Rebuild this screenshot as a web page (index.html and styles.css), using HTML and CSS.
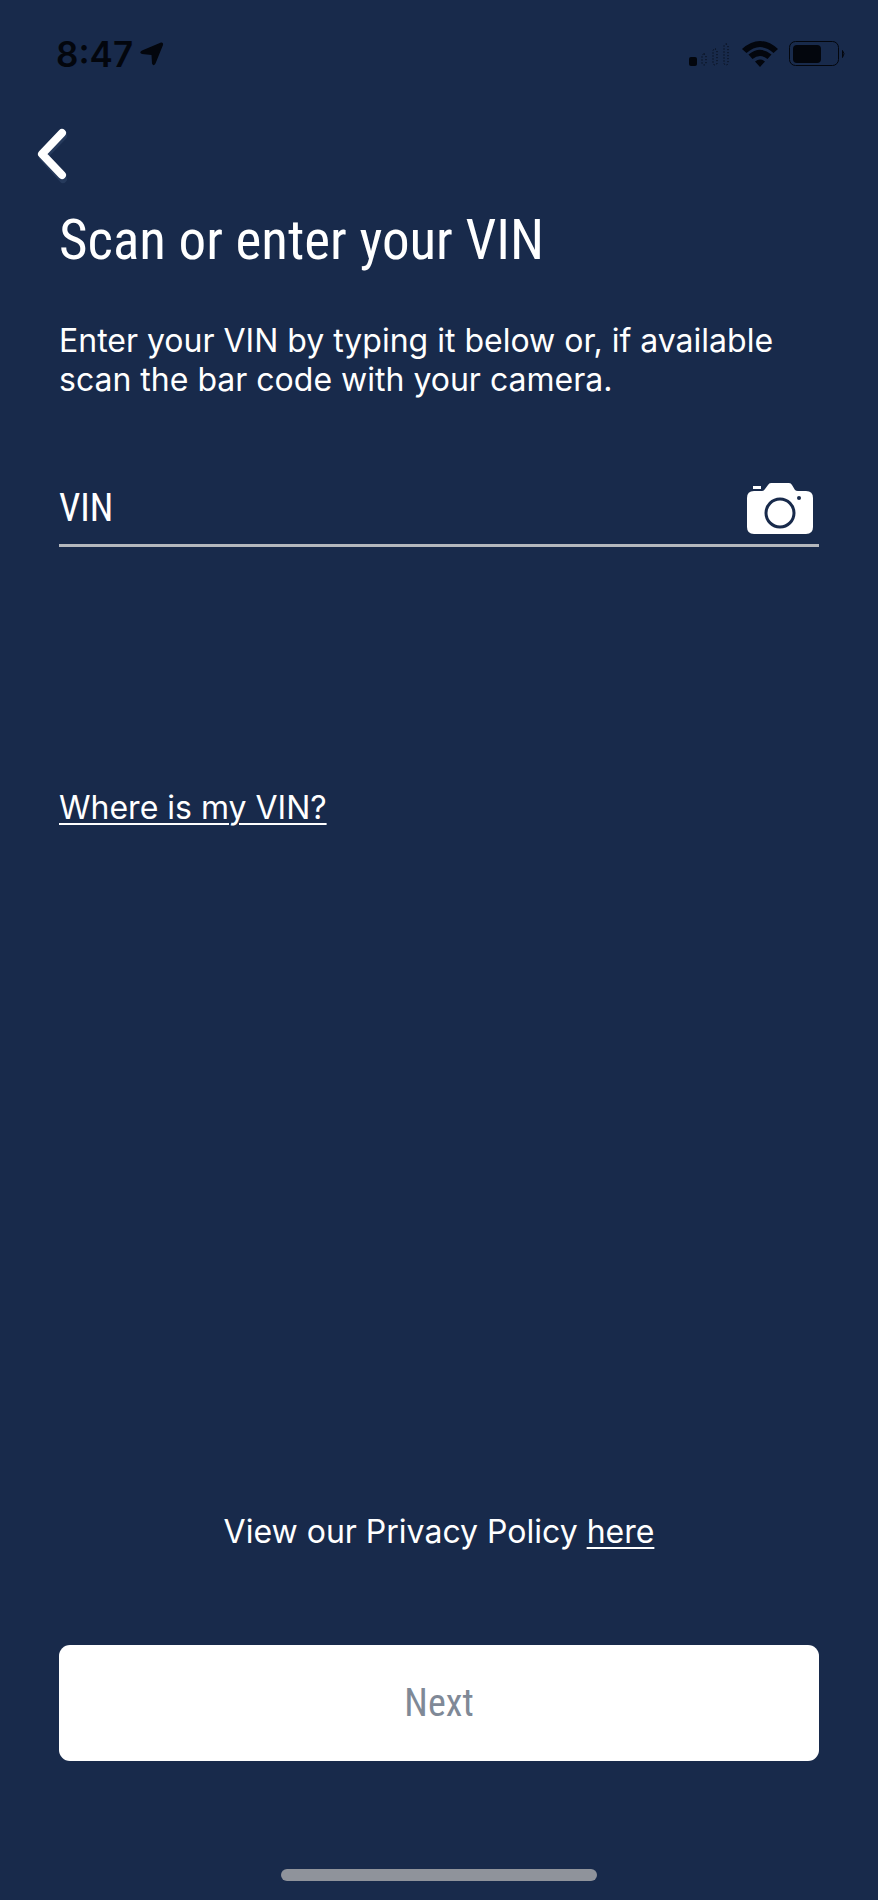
FILE: index.html
```html
<!DOCTYPE html>
<html lang="en">
<head>
<meta charset="utf-8">
<meta name="viewport" content="width=device-width, initial-scale=1">
<title>Scan or enter your VIN</title>
<link rel="stylesheet" href="styles.css">
</head>
<body>
<div class="screen">
  <header class="status">
    <div class="status-left">
      <span class="time">8:47</span>
      <svg class="location" width="24" height="24" viewBox="0 0 24 24" aria-hidden="true"><path d="M21 .5Q23.500 0 23 3L15.500 21.500Q13.500 25 12 21.500L11.500 13 2 12Q-1.500 10.500 2 8.500Z"/></svg>
    </div>
    <div class="status-right">
      <svg width="42" height="26" viewBox="0 0 42 26" aria-hidden="true">
        <rect x="0" y="16" width="8" height="9" rx="2"/>
        <g class="faint-bars">
          <rect x="13" y="13" width="4" height="11" rx="2"/>
          <rect x="24" y="8" width="4" height="16" rx="2"/>
          <rect x="35" y="3" width="4" height="21" rx="2"/>
        </g>
      </svg>
      <svg width="36" height="26" viewBox="0 0 36 26" aria-hidden="true"><path d="M0 8Q18-8 36 8L31.500 12Q18 0 4.500 12ZM6.500 13.500Q18 4 29.500 13.500L25.500 18Q18 12 10.500 18ZM13 20.500Q18 16.500 23 20.500L18 26Z"/></svg>
      <svg width="56" height="26" viewBox="0 0 56 26" aria-hidden="true">
        <rect class="outline" x=".5" y=".5" width="49" height="24" rx="6"/>
        <rect x="4" y="4" width="28" height="18" rx="4"/>
        <path class="outline" d="M53.500 9.500Q56.500 12.500 53.500 16.500Z"/>
      </svg>
    </div>
  </header>
  <nav class="nav">
    <button class="back" type="button" aria-label="Back">
      <svg width="36" height="60" viewBox="0 0 36 60" aria-hidden="true"><path class="chevron-shadow" d="M27 12 7 33l20 22"/><path class="chevron" d="M26 9 6 30l20 21"/></svg>
    </button>
  </nav>
  <main class="content">
    <h1 class="title">Scan or enter your VIN</h1>
    <p class="intro">Enter your VIN by typing it below or, if available scan the bar code with your camera.</p>
    <div class="field">
      <input class="vin" type="text" placeholder="VIN" aria-label="VIN">
      <button class="camera" type="button" aria-label="Scan bar code">
        <svg width="66" height="51" viewBox="0 0 66 51" aria-hidden="true">
          <path d="M6 3h8v3H6zM7 8h8q2 0 3-2l3-4q1-2 3-2h18q2 0 3 2l3 5q1 1 3 1h8q7 0 7 7v29q0 7-7 7H7q-7 0-7-7V15q0-7 7-7z"/>
          <circle class="lens" cx="33" cy="30" r="14"/>
          <circle class="dot" cx="52" cy="15" r="2"/>
        </svg>
      </button>
    </div>
    <a class="link help" href="#vin-help">Where is my VIN?</a>
    <p class="privacy">View our Privacy Policy <a class="link" href="#privacy">here</a></p>
    <button class="next" type="button">Next</button>
  </main>
  <div class="home-bar"></div>
</div>
</body>
</html>
```
FILE: styles.css
```css
* { box-sizing: border-box; }
body {
  margin: 0;
  background: #182a4b;
  color: #fff;
  font-family: Inter, "Liberation Sans", sans-serif;
}
button { padding: 0; border: 0; background: none; font: inherit; }
svg { display: block; }
.screen {
  display: flex;
  flex-direction: column;
  min-height: 100vh;
  padding-bottom: 19px;
}
.status {
  display: flex;
  justify-content: space-between;
  align-items: center;
  padding: 32px 33px 0 56px;
  color: #03060d;
}
.status svg { fill: #03060d; }
.status-left { display: flex; align-items: center; gap: 7px; }
.status-right { display: flex; align-items: center; gap: 11px; }
.time { font-size: 35px; line-height: 44px; font-weight: 600; }
.status .outline { fill: none; stroke: #03060d; }
.faint-bars rect { fill: none; stroke: #03060d; stroke-dasharray: 1 2; }
.nav { padding: 48px 36px 0; }
.back { display: block; }
.chevron, .chevron-shadow {
  fill: none;
  stroke: #fff;
  stroke-width: 8;
  stroke-linecap: round;
  stroke-linejoin: round;
}
.chevron-shadow { stroke: #263a5c; }
.content {
  display: flex;
  flex: 1;
  flex-direction: column;
  align-items: flex-start;
  padding: 0 59px;
}
.title, .vin, .next { font-family: "Roboto Condensed", Roboto, sans-serif; }
.title { margin: 24px 0 0; font-size: 55px; line-height: 64px; font-weight: 400; }
.intro { margin: 49px 0 0; font-size: 32px; line-height: 39px; }
.field {
  display: flex;
  align-items: center;
  width: 100%;
  margin-top: 84px;
  padding: 0 6px 10px 0;
  border-bottom: 3px solid #b4b8bd;
}
.vin {
  flex: 1;
  min-width: 0;
  padding: 0;
  border: 0;
  outline: 0;
  background: none;
  color: #fff;
  font-size: 38px;
  line-height: 51px;
}
.vin::placeholder { color: #fff; opacity: 1; }
.camera svg { fill: #fff; }
.lens { fill: #fff; stroke: #182a4b; stroke-width: 3; }
.dot { fill: #182a4b; }
.link { color: inherit; text-decoration-thickness: 2px; text-underline-offset: 4px; }
.help, .privacy { font-size: 32px; line-height: 40px; }
.help { margin-top: 241px; }
.privacy { align-self: center; margin: auto 0 0; }
.next {
  width: 100%;
  margin: 93px 0 108px;
  padding: 32px 0;
  border-radius: 11px;
  background: #fff;
  color: #7f8997;
  font-size: 38px;
  line-height: 52px;
}
.home-bar {
  align-self: center;
  width: 36%;
  height: 12px;
  border-radius: 6px;
  background: #8f939b;
}
```
